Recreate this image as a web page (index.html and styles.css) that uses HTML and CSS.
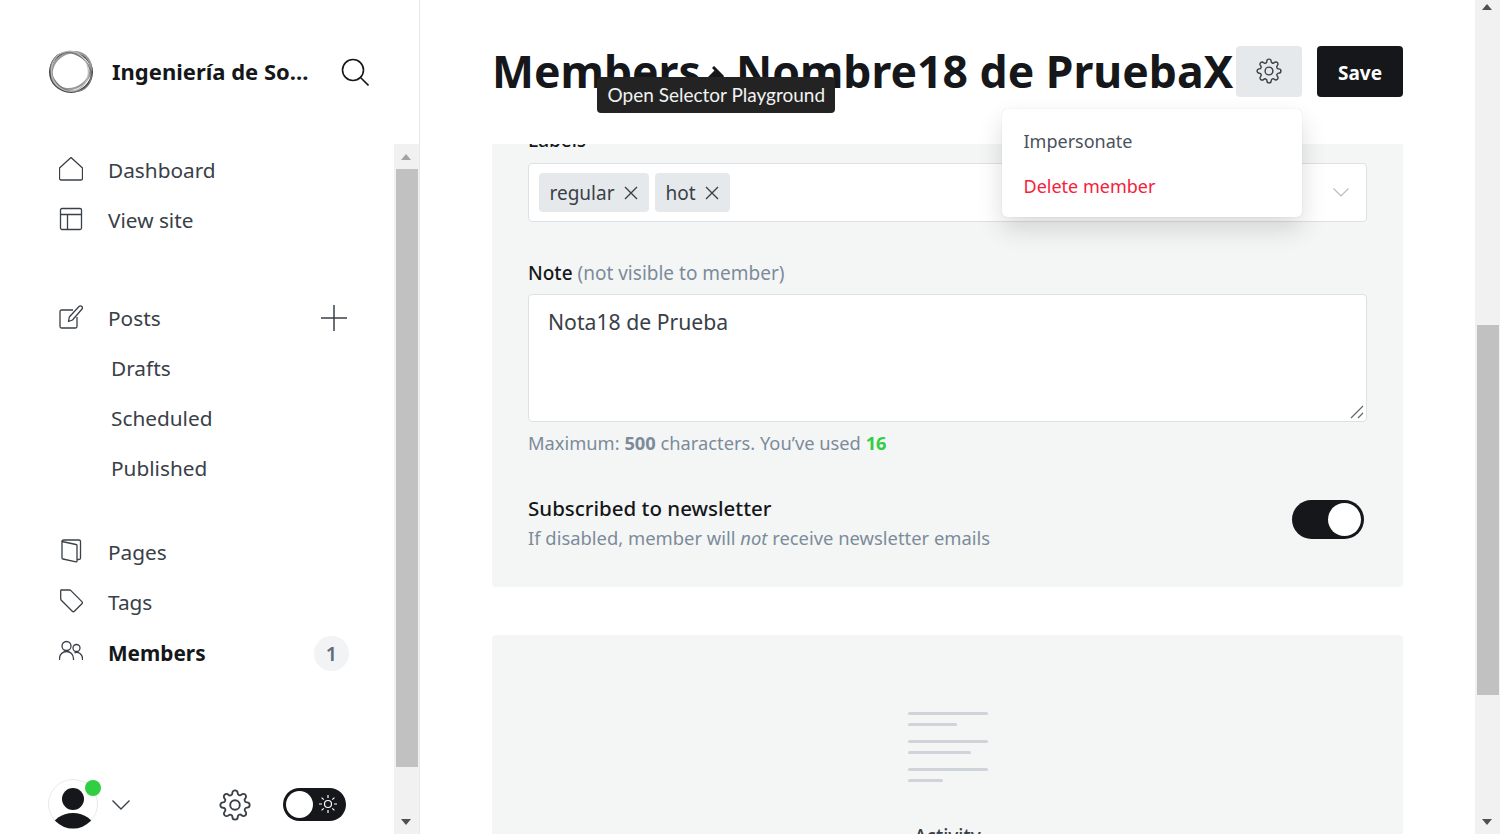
FILE: index.html
```html
<!DOCTYPE html>
<html lang="en">
<head>
  <meta charset="UTF-8">
  <title>Members - Nombre18 de PruebaX</title>
  <link rel="stylesheet" href="styles.css">
</head>
<body>
  <svg class="defs" width="0" height="0">
    <symbol id="gear" viewBox="0 0 24 24">
      <circle cx="12" cy="12" r="3.6"/>
      <path d="M19.4 15a1.65 1.65 0 0 0 .33 1.82l.06.06a2 2 0 0 1 0 2.83 2 2 0 0 1-2.83 0l-.06-.06a1.65 1.65 0 0 0-1.82-.33 1.65 1.65 0 0 0-1 1.51V21a2 2 0 0 1-2 2 2 2 0 0 1-2-2v-.09A1.65 1.65 0 0 0 9 19.4a1.65 1.65 0 0 0-1.82.33l-.06.06a2 2 0 0 1-2.83 0 2 2 0 0 1 0-2.83l.06-.06a1.65 1.65 0 0 0 .33-1.82 1.65 1.65 0 0 0-1.51-1H3a2 2 0 0 1-2-2 2 2 0 0 1 2-2h.09A1.65 1.65 0 0 0 4.6 9a1.65 1.65 0 0 0-.33-1.82l-.06-.06a2 2 0 0 1 0-2.83 2 2 0 0 1 2.83 0l.06.06a1.65 1.65 0 0 0 1.82.33H9a1.65 1.65 0 0 0 1-1.51V3a2 2 0 0 1 2-2 2 2 0 0 1 2 2v.09a1.65 1.65 0 0 0 1 1.51 1.65 1.65 0 0 0 1.82-.33l.06-.06a2 2 0 0 1 2.83 0 2 2 0 0 1 0 2.83l-.06.06a1.65 1.65 0 0 0-.33 1.82V9a1.65 1.65 0 0 0 1.51 1H21a2 2 0 0 1 2 2 2 2 0 0 1-2 2h-.09a1.65 1.65 0 0 0-1.51 1z"/>
    </symbol>
  </svg>

  <div class="app">
    <aside class="sidebar">
      <div class="side-head">
        <svg class="logo" viewBox="0 0 46 46" width="46" height="46">
          <ellipse cx="23" cy="23" rx="21" ry="20" fill="none" stroke="#444" stroke-width="2"/>
          <ellipse cx="24" cy="22" rx="20.5" ry="17.5" fill="none" stroke="#999" stroke-width="2.2" transform="rotate(-35 23 23)"/>
          <ellipse cx="23" cy="23" rx="21.5" ry="18" fill="none" stroke="#777" stroke-width="1.4" transform="rotate(40 23 23)"/>
          <ellipse cx="22" cy="24" rx="20" ry="18.5" fill="none" stroke="#bbb" stroke-width="1.2" transform="rotate(80 23 23)"/>
        </svg>
        <span class="blog-name">Ingeniería de So...</span>
        <svg class="search" viewBox="0 0 28 28" width="28" height="28">
          <circle cx="12" cy="12" r="10.5"/>
          <path d="M19.5 19.5 L27.5 27.5"/>
        </svg>
      </div>

      <div class="side-body">
        <div class="side-scroll">
          <nav class="side-nav">
            <ul class="nav-group">
              <li class="nav-item">
                <svg class="nav-icon" viewBox="0 0 24 24"><path d="M.5 11 12 .5 23.5 11v10.500a1.500 1.500 0 0 1-1.500 1.500H2a1.500 1.500 0 0 1-1.500-1.500z"/></svg>
                <span>Dashboard</span>
              </li>
              <li class="nav-item">
                <svg class="nav-icon" viewBox="0 0 24 24"><rect x="1.500" y="1.500" width="21" height="21" rx="1.500"/><path d="M1.500 7.500h21M8.500 7.500v15"/></svg>
                <span>View site</span>
              </li>
            </ul>
            <ul class="nav-group posts-group">
              <li class="nav-item">
                <svg class="nav-icon" viewBox="0 0 24 24"><path d="M14 5H2.500A1.500 1.500 0 0 0 1 6.500v15A1.500 1.500 0 0 0 2.500 23h14a1.500 1.500 0 0 0 1.500-1.500V12"/><path d="M9.500 16.500l.8-4.500L20 1.500a2 2 0 0 1 2.800 0 2 2 0 0 1 0 2.800L13.500 15z"/></svg>
                <span>Posts</span>
                <svg class="plus" viewBox="0 0 26 26" width="26" height="26"><path d="M13 0v26M0 13h26"/></svg>
              </li>
              <li class="nav-sub">Drafts</li>
              <li class="nav-sub">Scheduled</li>
              <li class="nav-sub">Published</li>
            </ul>
            <ul class="nav-group pages-group">
              <li class="nav-item">
                <svg class="nav-icon" viewBox="0 0 24 24"><path d="M3 2.500 17 5.500a1 1 0 0 1 1 1V22a.8.8 0 0 1-1 .8L4 20a1 1 0 0 1-1-1z"/><path d="M3 2.500A1.500 1.500 0 0 1 4.500 1H20a1.500 1.500 0 0 1 1.500 1.500V19a1.500 1.500 0 0 1-1.500 1.500h-2"/></svg>
                <span>Pages</span>
              </li>
              <li class="nav-item">
                <svg class="nav-icon" viewBox="0 0 24 24"><path d="M2 1h8.500a2 2 0 0 1 1.400.6l11 11a1.500 1.500 0 0 1 0 2.100l-7.500 7.500a1.500 1.500 0 0 1-2.100 0l-11-11a2 2 0 0 1-.6-1.400V2a1 1 0 0 1 .8-1z"/></svg>
                <span>Tags</span>
              </li>
              <li class="nav-item active">
                <svg class="nav-icon" viewBox="0 0 24 24"><circle cx="7.500" cy="6" r="4.500"/><path d="M.5 20v-1.500a7 7 0 0 1 14 0V20"/><circle cx="17.500" cy="8" r="3.500"/><path d="M15.500 12.800a6 6 0 0 1 8 5.700V20"/></svg>
                <span>Members</span>
                <span class="count">1</span>
              </li>
            </ul>
          </nav>

          <div class="side-foot">
            <div class="avatar">
              <svg viewBox="0 0 50 50" width="50" height="50">
                <defs><clipPath id="avatar-clip"><circle cx="25" cy="25" r="24.500"/></clipPath></defs>
                <circle cx="25" cy="25" r="24.500" fill="#fff" stroke="#e6e9eb"/>
                <g clip-path="url(#avatar-clip)" fill="#15171a">
                  <circle cx="25" cy="20" r="11"/>
                  <ellipse cx="25" cy="49" rx="21" ry="15"/>
                </g>
              </svg>
              <span class="online"></span>
            </div>
            <svg class="foot-caret" viewBox="0 0 18 10" width="18" height="10"><path d="M.5.5 9 9 17.500.5"/></svg>
            <svg class="foot-gear" width="32" height="32"><use href="#gear"/></svg>
            <div class="theme-toggle">
              <span class="theme-knob"></span>
              <svg class="sun" viewBox="0 0 18 18" width="18" height="18">
                <circle cx="9" cy="9" r="3.500"/>
                <path d="M9 0v3M9 15v3M0 9h3M15 9h3M2.600 2.600l2.100 2.100M13.300 13.300l2.100 2.100M2.600 15.400l2.100-2.100M13.300 4.700l2.100-2.100"/>
              </svg>
            </div>
          </div>
        </div>
        <div class="scrollbar">
          <span class="arrow-up"></span>
          <span class="side-thumb"></span>
          <span class="arrow-down"></span>
        </div>
      </div>
    </aside>

    <main class="main">
      <header class="page-head">
        <h1 class="page-title">Members <svg class="crumb" viewBox="0 0 12 20" width="12" height="20"><path d="M1 1l9 9-9 9"/></svg> Nombre18 de PruebaX</h1>
        <button class="settings-btn"><svg width="26" height="26"><use href="#gear"/></svg></button>
        <button class="save-btn">Save</button>
        <div class="tooltip">Open Selector Playground</div>
        <ul class="dropdown">
          <li>Impersonate</li>
          <li class="danger">Delete member</li>
        </ul>
      </header>

      <div class="page-body">
        <section class="card form-card">
          <label class="field-label">Labels</label>
          <div class="token-input">
            <span class="token">regular <svg viewBox="0 0 14 14" width="14" height="14"><path d="M1 1l12 12M13 1 1 13"/></svg></span>
            <span class="token">hot <svg viewBox="0 0 14 14" width="14" height="14"><path d="M1 1l12 12M13 1 1 13"/></svg></span>
            <svg class="select-caret" viewBox="0 0 16 9" width="16" height="9"><path d="M.5.5 8 8 15.500.5"/></svg>
          </div>

          <label class="field-label note-label">Note <span class="muted-label">(not visible to member)</span></label>
          <div class="note-box">
            Nota18 de Prueba
            <svg class="resize" viewBox="0 0 14 14" width="14" height="14"><path d="M1 13 13 1M8 13l5-5"/></svg>
          </div>
          <p class="hint">Maximum: <b>500</b> characters. You’ve used <b class="used">16</b></p>

          <div class="newsletter">
            <div>
              <h4>Subscribed to newsletter</h4>
              <p>If disabled, member will <em>not</em> receive newsletter emails</p>
            </div>
            <span class="switch"><span class="switch-knob"></span></span>
          </div>
        </section>

        <section class="card activity-card">
          <div class="empty-lines">
            <i class="w-full"></i><i class="w-short"></i>
            <i class="w-full gap"></i><i class="w-mid"></i>
            <i class="w-full gap"></i><i class="w-tiny"></i>
          </div>
          <h3>Activity</h3>
        </section>
      </div>
    </main>

    <div class="scrollbar page-scrollbar">
      <span class="arrow-up"></span>
      <span class="page-thumb"></span>
      <span class="arrow-down"></span>
    </div>
  </div>
</body>
</html>
```
FILE: styles.css
```css
* {
  box-sizing: border-box;
}

html, body {
  margin: 0;
  height: 834px;
  overflow: hidden;
}

body {
  font-family: "Noto Sans", "Open Sans", sans-serif;
  color: #15171a;
  background-color: #fff;
}

ul {
  list-style: none;
  margin: 0;
  padding: 0;
}

.defs {
  position: absolute;
}

.app {
  display: flex;
  height: 834px;
}

/* sidebar */
.sidebar {
  width: 420px;
  flex: none;
  display: flex;
  flex-direction: column;
  border-right: 1px solid #e6e9eb;
}

.side-head {
  height: 144px;
  flex: none;
  display: flex;
  align-items: center;
  padding: 0 50px 0 48px;
}

.logo {
  flex: none;
}

.blog-name {
  margin-left: 18px;
  margin-bottom: 3px;
  font-size: 22px;
  font-weight: 700;
  white-space: nowrap;
}

.search {
  margin-left: auto;
  fill: none;
  stroke: #15171a;
  stroke-width: 1.6;
}

.side-body {
  flex: 1;
  display: flex;
  min-height: 0;
}

.side-scroll {
  flex: 1;
  display: flex;
  flex-direction: column;
  justify-content: space-between;
  padding-bottom: 5px;
}

.side-nav {
  padding-top: 1px;
}

.nav-group {
  padding: 0 45px 0 59px;
}

.posts-group {
  margin-top: 48px;
}

.pages-group {
  margin-top: 34px;
}

.nav-item {
  height: 50px;
  display: flex;
  align-items: center;
  font-size: 20.8px;
  color: #394047;
}

.nav-icon {
  width: 24px;
  height: 24px;
  flex: none;
  margin: -2px 25px 0 0;
  fill: none;
  stroke: #394047;
  stroke-width: 1.300;
  stroke-linejoin: round;
}

.plus {
  margin-left: auto;
  margin-right: 2px;
  fill: none;
  stroke: #394047;
  stroke-width: 1.500;
}

.nav-sub {
  height: 50px;
  display: flex;
  align-items: center;
  padding-left: 52px;
  font-size: 20.8px;
  color: #394047;
}

.nav-item.active {
  margin-top: 1px;
  color: #15171a;
  font-weight: 700;
}

.count {
  margin-left: auto;
  width: 35px;
  height: 35px;
  border-radius: 50%;
  background-color: #f1f3f4;
  color: #626d79;
  font-size: 20px;
  font-weight: 600;
  display: flex;
  align-items: center;
  justify-content: center;
}

.side-foot {
  display: flex;
  align-items: center;
  padding-left: 48px;
}

.avatar {
  position: relative;
  width: 50px;
  height: 50px;
}

.avatar svg {
  display: block;
}

.online {
  position: absolute;
  top: 1px;
  right: -3px;
  width: 16px;
  height: 16px;
  border-radius: 50%;
  background-color: #30cf43;
}

.foot-caret {
  margin: 2px 0 0 14px;
  fill: none;
  stroke: #394047;
  stroke-width: 1.400;
}

.foot-gear {
  margin-left: 89px;
  margin-top: 2px;
  fill: none;
  stroke: #394047;
  stroke-width: 1.400;
}

.theme-toggle {
  margin-left: 32px;
  width: 63px;
  height: 33px;
  border-radius: 17px;
  background-color: #15171a;
  display: flex;
  align-items: center;
  padding: 0 3px;
}

.theme-knob {
  width: 27px;
  height: 27px;
  border-radius: 50%;
  background-color: #fff;
}

.sun {
  margin-left: 6px;
  fill: none;
  stroke: #fff;
  stroke-width: 1.200;
}

/* browser scrollbars */
.scrollbar {
  width: 25px;
  flex: none;
  position: relative;
  background-color: #f1f1f1;
}

.side-thumb {
  position: absolute;
  top: 25px;
  left: 2px;
  width: 22px;
  height: 598px;
  background-color: #c1c1c1;
}

.page-thumb {
  position: absolute;
  top: 325px;
  left: 2px;
  width: 22px;
  height: 370px;
  background-color: #c1c1c1;
}

.arrow-up, .arrow-down {
  position: absolute;
  left: 7px;
  width: 0;
  height: 0;
  border-left: 5.500px solid transparent;
  border-right: 5.500px solid transparent;
}

.arrow-up {
  top: 10px;
  border-bottom: 6px solid #a3a3a3;
}

.arrow-down {
  bottom: 9px;
  border-top: 6px solid #505050;
}

.page-scrollbar .arrow-up {
  top: 4px;
  border-bottom-color: #505050;
}

/* main */
.main {
  flex: 1;
  min-width: 0;
  display: flex;
  flex-direction: column;
  padding: 0 72px;
}

.page-head {
  position: relative;
  z-index: 2;
  height: 144px;
  flex: none;
  display: flex;
  align-items: flex-start;
  padding-top: 46px;
  background-color: #fff;
}

.page-title {
  margin: -3px 0 0 0;
  font-size: 44.5px;
  line-height: 56px;
  font-weight: 700;
  white-space: nowrap;
}

.crumb {
  fill: none;
  stroke: #15171a;
  stroke-width: 3;
  vertical-align: 2px;
}

.settings-btn {
  flex: none;
  margin-left: auto;
  width: 66px;
  height: 51px;
  border: none;
  border-radius: 4px;
  background-color: #e6e9eb;
  display: flex;
  align-items: center;
  justify-content: center;
  padding: 0 0 2px;
  fill: none;
  stroke: #394047;
  stroke-width: 1.300;
}

.save-btn {
  flex: none;
  margin-left: 15px;
  width: 86px;
  height: 51px;
  padding: 2px 0 0;
  border: none;
  border-radius: 4px;
  background-color: #15171a;
  color: #fff;
  font-family: inherit;
  font-size: 19px;
  font-weight: 700;
}

.tooltip {
  position: absolute;
  left: 105px;
  top: 77px;
  padding: 0 9.500px 0 10.500px;
  height: 36px;
  line-height: 35px;
  border-radius: 4px;
  background-color: #232323;
  color: #f2f2f2;
  font-family: Lato, "Noto Sans", sans-serif;
  font-size: 19px;
  white-space: nowrap;
}

.tooltip::before {
  content: "";
  position: absolute;
  left: 111px;
  top: -8px;
  border-left: 8px solid transparent;
  border-right: 8px solid transparent;
  border-bottom: 8px solid #15171a;
}

.dropdown {
  position: absolute;
  left: 510px;
  top: 109px;
  width: 300px;
  height: 108px;
  padding: 10px 0 0 21.500px;
  border-radius: 5px;
  background-color: #fff;
  box-shadow: 0 0 1px rgba(0, 0, 0, .2), 0 12px 26px rgba(0, 0, 0, .14);
  font-size: 18px;
  color: #4a525b;
}

.dropdown li {
  height: 45px;
  line-height: 45px;
}

.dropdown .danger {
  color: #f5213a;
}

.page-body {
  flex: 1;
  min-height: 0;
  overflow: hidden;
}

.card {
  background-color: #f4f6f6;
  border-radius: 4px;
}

.form-card {
  height: 443px;
  padding: 0 36px;
  overflow: hidden;
  border-radius: 0 0 4px 4px;
}

.field-label {
  display: block;
  font-size: 19px;
  font-weight: 500;
  line-height: 28px;
}

.form-card > .field-label:first-child {
  margin-top: -18px;
}

.token-input {
  height: 59px;
  margin-top: 9px;
  display: flex;
  align-items: center;
  gap: 6px;
  padding: 0 10px;
  background-color: #fff;
  border: 1px solid #dde1e5;
  border-radius: 4px;
}

.token {
  height: 39px;
  display: flex;
  align-items: center;
  gap: 9px;
  padding: 0 11.500px 0 10.500px;
  border-radius: 4px;
  background-color: #e6e9eb;
  font-size: 19px;
  color: #394047;
}

.token svg {
  fill: none;
  stroke: #394047;
  stroke-width: 1.400;
}

.select-caret {
  margin-left: auto;
  margin-right: 7px;
  fill: none;
  stroke: #b5bdc6;
  stroke-width: 1.200;
}

.note-label {
  margin-top: 37px;
}

.muted-label {
  font-weight: 400;
  color: #7c8b9a;
}

.note-box {
  position: relative;
  height: 128px;
  margin-top: 7px;
  padding: 12px 19px;
  background-color: #fff;
  border: 1px solid #dde1e5;
  border-radius: 4px;
  font-size: 21.2px;
  line-height: 30px;
  color: #394047;
}

.resize {
  position: absolute;
  right: 2px;
  bottom: 2px;
  fill: none;
  stroke: #666;
  stroke-width: 1.200;
}

.hint {
  margin: 7px 0 0;
  font-size: 18.3px;
  line-height: 28px;
  color: #7c8b9a;
}

.used {
  color: #30cf43;
}

.newsletter {
  margin-top: 36px;
  display: flex;
  justify-content: space-between;
  align-items: flex-start;
  padding-right: 3px;
}

.newsletter h4 {
  margin: 0;
  font-size: 20.5px;
  font-weight: 500;
  line-height: 30px;
}

.newsletter p {
  margin: 0;
  font-size: 18.4px;
  line-height: 30px;
  color: #7c8b9a;
}

.switch {
  margin-top: 7px;
  width: 72px;
  height: 39px;
  border-radius: 20px;
  background-color: #15171a;
  display: flex;
  justify-content: flex-end;
  align-items: center;
  padding: 0 3px;
}

.switch-knob {
  width: 33px;
  height: 33px;
  border-radius: 50%;
  background-color: #fff;
}

.activity-card {
  height: 260px;
  margin-top: 48px;
  padding-top: 77px;
  text-align: center;
}

.empty-lines {
  width: 80px;
  margin: 0 auto;
  display: flex;
  flex-direction: column;
  align-items: flex-start;
  gap: 8px;
}

.empty-lines i {
  display: block;
  height: 3px;
  border-radius: 2px;
  background-color: #ced4d9;
}

.empty-lines .gap {
  margin-top: 6px;
}

.w-full {
  width: 80px;
}

.w-short {
  width: 49px;
}

.w-mid {
  width: 63px;
}

.w-tiny {
  width: 35px;
}

.activity-card h3 {
  margin: 41px 0 0;
  font-size: 19px;
  font-weight: 500;
  color: #394047;
}
```
